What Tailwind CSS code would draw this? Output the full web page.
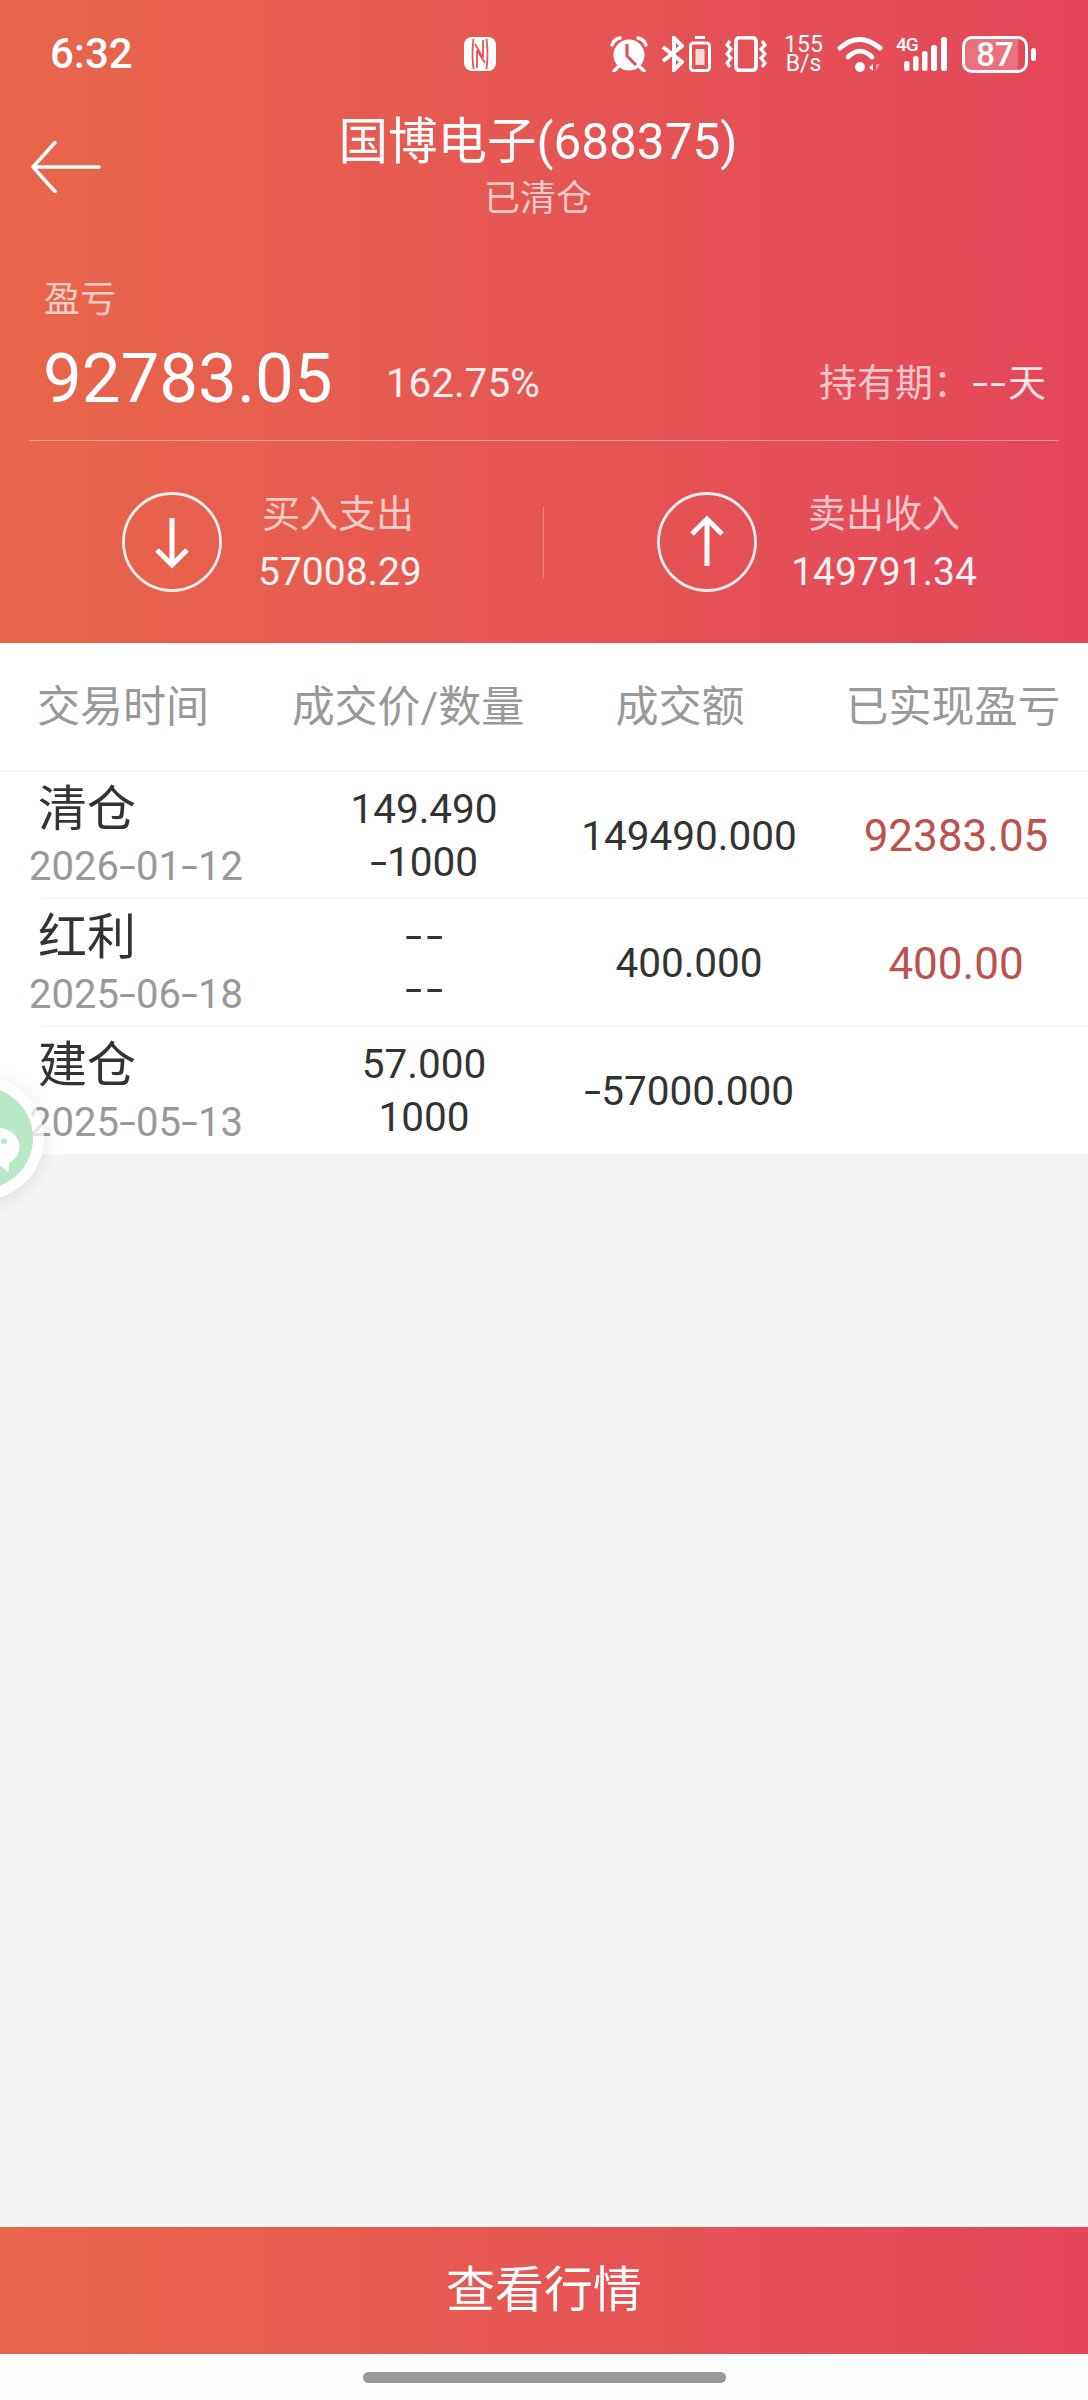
<!DOCTYPE html>
<html lang="zh-CN">
<head>
  <meta charset="UTF-8">
  <meta name="viewport" content="width=device-width, initial-scale=1.0">
  <title>国博电子</title>
  <script src="https://cdn.jsdelivr.net/npm/@tailwindcss/browser@4"></script>
</head>
<body class="font-['Roboto','Noto_Sans_CJK_SC',sans-serif] bg-[#f5f5f5]">
<div class="relative w-[1088px] h-[2400px] overflow-hidden flex flex-col">

  <!-- 顶部红色区域 -->
  <header class="h-[643px] shrink-0 bg-linear-to-r/srgb from-[#e86649] to-[#e3465a] text-white">

    <!-- 状态栏 -->
    <div class="h-[112px] flex items-center pb-[4px] pl-[50px]">
      <span class="w-[82px] text-[42px] leading-none font-medium">6:32</span>
      <svg class="ml-[332px]" width="32" height="34" viewBox="0 0 32 34">
        <rect width="32" height="34" rx="8" fill="#fff"/>
        <path d="M9.500 2Q7.500 17 9.500 32M22.500 2Q24.500 17 22.500 32" stroke="#e5565a" stroke-width="1.800" fill="none"/>
        <path d="M13 13V31M13 13L21 26M19 3V21M11 7L19 21" stroke="#e5565a" stroke-width="1.800" fill="none"/>
      </svg>
      <svg class="ml-[114px]" width="38" height="36" viewBox="0 0 38 36">
        <circle cx="19" cy="19" r="15.500" fill="#fff"/>
        <path d="M2 9Q4 3 10 2M36 9Q34 3 28 2M8 31l-4 4M30 31l4 4" stroke="#fff" stroke-width="3.400" fill="none" stroke-linecap="round"/>
        <path d="M17 8v12l9 9" stroke="#e44c58" stroke-width="3" fill="none"/>
      </svg>
      <svg class="ml-[13px]" width="23" height="36" viewBox="0 0 23 36" fill="none" stroke="#fff" stroke-width="4">
        <path d="M2 11l19 15-8 8V2l8 8L2 25"/>
      </svg>
      <svg class="ml-[5px]" width="22" height="36" viewBox="0 0 22 36" fill="none" stroke="#fff">
        <path d="M6 1.500h10" stroke-width="3"/>
        <rect x="1.500" y="7" width="19" height="27.500" rx="3" stroke-width="3"/>
        <rect x="6.500" y="13" width="9" height="16" fill="#fff" fill-opacity=".8" stroke="none"/>
      </svg>
      <svg class="ml-[14px]" width="42" height="36" viewBox="0 0 42 36" fill="none" stroke="#fff">
        <rect x="11" y="1.500" width="20" height="33" rx="4" stroke-width="3.800"/>
        <path d="M5 5l-3 4 4 4-4 5 4 4-4 5 3 4" stroke-width="3.200"/>
        <path d="M37 5l3 4-4 4 4 5-4 4 4 5-3 4" stroke-width="3.200"/>
      </svg>
      <div class="ml-[18px] w-[37px] flex flex-col items-center text-[23px] leading-[19px]">
        <span>155</span>
        <span>B/s</span>
      </div>
      <svg class="ml-[15px]" width="46" height="36" viewBox="0 0 46 36" fill="none" stroke="#fff" stroke-linecap="round">
        <path d="M3 12Q22-5 43 12" stroke-width="5"/>
        <path d="M11 21Q23 9 35 21" stroke-width="4.600"/>
        <circle cx="23" cy="31" r="5" fill="#fff" stroke="none"/>
        <path d="M36 28v7l-4-3.500Z" fill="#fff" stroke="none"/>
        <path d="M39 28v7l4-7Z" fill="#fff" fill-opacity=".4" stroke="none"/>
      </svg>
      <div class="relative ml-[13px] w-[51px] h-[36px]">
        <span class="absolute left-0 top-[-1px] text-[19px] leading-[19px] font-medium tracking-[-1px]">4G</span>
        <svg class="absolute inset-0" width="51" height="36" viewBox="0 0 51 36" fill="#fff">
          <rect x="8" y="25" width="5.500" height="10" rx="2.500"/>
          <rect x="17" y="20" width="5.500" height="15" rx="2.500"/>
          <rect x="26" y="15" width="5.500" height="20" rx="2.500"/>
          <rect x="35" y="9" width="6" height="26" rx="2.500"/>
          <rect x="45" y="1" width="6" height="34" rx="2.500"/>
        </svg>
      </div>
      <div class="ml-[15px] w-[66px] h-[37px] rounded-[10px] border-[3px] border-white bg-[linear-gradient(to_right,#ffffff38_88%,transparent_88%)] flex items-center justify-center text-[33px] leading-none font-medium">87</div>
      <span class="ml-[3px] w-[5px] h-[13px] rounded-full bg-white"></span>
    </div>

    <!-- 标题 -->
    <div class="grid grid-cols-[1fr_auto_1fr]">
      <svg class="ml-[31px] mt-[29px]" width="70" height="52" viewBox="0 0 70 52" fill="none" stroke="#fff" stroke-width="3.500" stroke-linecap="round" stroke-linejoin="round">
        <path d="M24 1.500 2 26l22 24.500M2 26h66"/>
      </svg>
      <div class="text-center -ml-[6px] mr-[6px]">
        <h1 class="text-[49.500px] leading-[60px] font-normal">国博电子(688375)</h1>
        <p class="mt-[4px] text-[36px] leading-[46px] text-white/70">已清仓</p>
      </div>
      <div></div>
    </div>

    <!-- 盈亏 -->
    <div class="mt-[53px] px-[44px] text-[36px] leading-[50px] text-white/70">盈亏</div>
    <div class="mt-[13px] h-[80px] pl-[43px] pr-[42px] flex items-center">
      <span class="text-[69px] leading-none">92783.05</span>
      <span class="ml-[53px] mt-[10px] text-[40.500px] leading-none text-white/90">162.75%</span>
      <span class="ml-auto mt-[10px] text-[38px] leading-none text-white/70">持有期：<span class="text-white/85"><span class="inline-block scale-x-150 mx-[4px]">-</span><span class="inline-block scale-x-150 mx-[4px]">-</span>天</span></span>
    </div>
    <div class="mt-[22px] mx-[29px] h-px bg-white/40"></div>

    <!-- 买入 / 卖出 -->
    <div class="h-[202px] flex items-center">
      <div class="w-[543px] pl-[122px] flex items-center">
        <svg width="100" height="100" viewBox="0 0 100 100" fill="none" stroke="#fff">
          <circle cx="50" cy="50" r="48.500" stroke-width="2.800" stroke-opacity=".9"/>
          <path d="M50 26v47M35 58l15 15 15-15" stroke-width="5"/>
        </svg>
        <div class="ml-[36px] w-[160px] text-center leading-[58px] pt-[2px]">
          <p class="text-[38px] text-white/70">买入支出</p>
          <p class="text-[39px] text-white/95">57008.29</p>
        </div>
      </div>
      <span class="w-px h-[71px] bg-white/30"></span>
      <div class="flex-1 pl-[113px] flex items-center">
        <svg width="100" height="100" viewBox="0 0 100 100" fill="none" stroke="#fff">
          <circle cx="50" cy="50" r="48.500" stroke-width="2.800" stroke-opacity=".9"/>
          <path d="M50 74V27M35 42l15-15 15 15" stroke-width="5"/>
        </svg>
        <div class="ml-[32px] w-[190px] text-center leading-[58px] pt-[2px]">
          <p class="text-[38px] text-white/70">卖出收入</p>
          <p class="text-[39px] text-white/95">149791.34</p>
        </div>
      </div>
    </div>
  </header>

  <!-- 交易记录表 -->
  <section class="bg-white shrink-0">
    <div class="h-[129px] grid grid-cols-4 items-center border-b border-[#eeeeee] text-[43px] text-[#999999] text-center">
      <span class="pr-[26px]">交易时间</span>
      <span>成交价/数量</span>
      <span>成交额</span>
      <span class="pl-[2px]">已实现盈亏</span>
    </div>

    <div class="ml-[43px] h-[127px] grid grid-cols-[249px_264px_266px_266px] items-center border-b border-[#eeeeee] text-[40.5px] text-[#333333] text-center">
      <div class="text-left pt-[3px]">
        <p class="-ml-[5px] text-[49px] leading-[58px]">清仓</p>
        <p class="-ml-[14px] pt-[3px] text-[#999999] text-[40px] leading-[50px]">2026<span class="inline-block scale-x-150 mx-[3px]">-</span>01<span class="inline-block scale-x-150 mx-[3px]">-</span>12</p>
      </div>
      <div class="leading-[53px] pt-[1px]">
        <p>149.490</p>
        <p><span class="inline-block scale-x-150 mx-[3px]">-</span>1000</p>
      </div>
      <span class="pt-[2px]">149490.000</span>
      <span class="pt-[2px] pl-[2px] text-[44px] text-[#bc524e]">92383.05</span>
    </div>

    <div class="ml-[43px] h-[128px] grid grid-cols-[249px_264px_266px_266px] items-center border-b border-[#eeeeee] text-[40.5px] text-[#333333] text-center">
      <div class="text-left pt-[3px]">
        <p class="-ml-[5px] text-[49px] leading-[58px]">红利</p>
        <p class="-ml-[14px] pt-[3px] text-[#999999] text-[40px] leading-[50px]">2025<span class="inline-block scale-x-150 mx-[3px]">-</span>06<span class="inline-block scale-x-150 mx-[3px]">-</span>18</p>
      </div>
      <div class="leading-[53px] pt-[1px]">
        <p><span class="inline-block scale-x-150 mx-[5px]">-</span><span class="inline-block scale-x-150 mx-[5px]">-</span></p>
        <p><span class="inline-block scale-x-150 mx-[5px]">-</span><span class="inline-block scale-x-150 mx-[5px]">-</span></p>
      </div>
      <span class="pt-[2px]">400.000</span>
      <span class="pt-[2px] pl-[2px] text-[44px] text-[#bc524e]">400.00</span>
    </div>

    <div class="ml-[43px] h-[127px] grid grid-cols-[249px_264px_266px_266px] items-center text-[40.5px] text-[#333333] text-center">
      <div class="text-left pt-[3px]">
        <p class="-ml-[5px] text-[49px] leading-[58px]">建仓</p>
        <p class="-ml-[14px] pt-[3px] text-[#999999] text-[40px] leading-[50px]">2025<span class="inline-block scale-x-150 mx-[3px]">-</span>05<span class="inline-block scale-x-150 mx-[3px]">-</span>13</p>
      </div>
      <div class="leading-[53px] pt-[1px]">
        <p>57.000</p>
        <p>1000</p>
      </div>
      <span class="pt-[2px]"><span class="inline-block scale-x-150 mx-[3px]">-</span>57000.000</span>
      <span></span>
    </div>
  </section>

  <div class="flex-1"></div>

  <!-- 底部按钮 -->
  <button class="h-[127px] shrink-0 bg-linear-to-r/srgb from-[#e86649] to-[#e3465a] text-white text-[49px]">查看行情</button>
  <div class="h-[46px] shrink-0 bg-[#fdfdfd] flex justify-center pt-[18px]">
    <span class="w-[363px] h-[11px] rounded-full bg-[#999999]"></span>
  </div>

  <!-- 悬浮客服按钮 -->
  <div class="absolute left-[-80px] top-[1076px] w-[124px] h-[124px] rounded-full bg-white/75 shadow-[0_4px_20px_rgba(0,0,0,0.1)] flex items-center justify-center">
    <div class="w-[102px] h-[102px] rounded-full bg-[#b9e8c8] flex items-center justify-center">
      <svg class="ml-[22px] mt-[22px]" width="54" height="48" viewBox="0 0 62 56" fill="#fff">
        <path d="M31 2C14 2 0 12 0 25s14 23 31 23c3 0 5 0 8-1l10 8 1-11c7-4 12-11 12-19C62 12 48 2 31 2Z"/>
        <circle cx="44" cy="19" r="3.500" fill="#b9e8c8"/>
      </svg>
    </div>
  </div>
</div>
</body>
</html>
